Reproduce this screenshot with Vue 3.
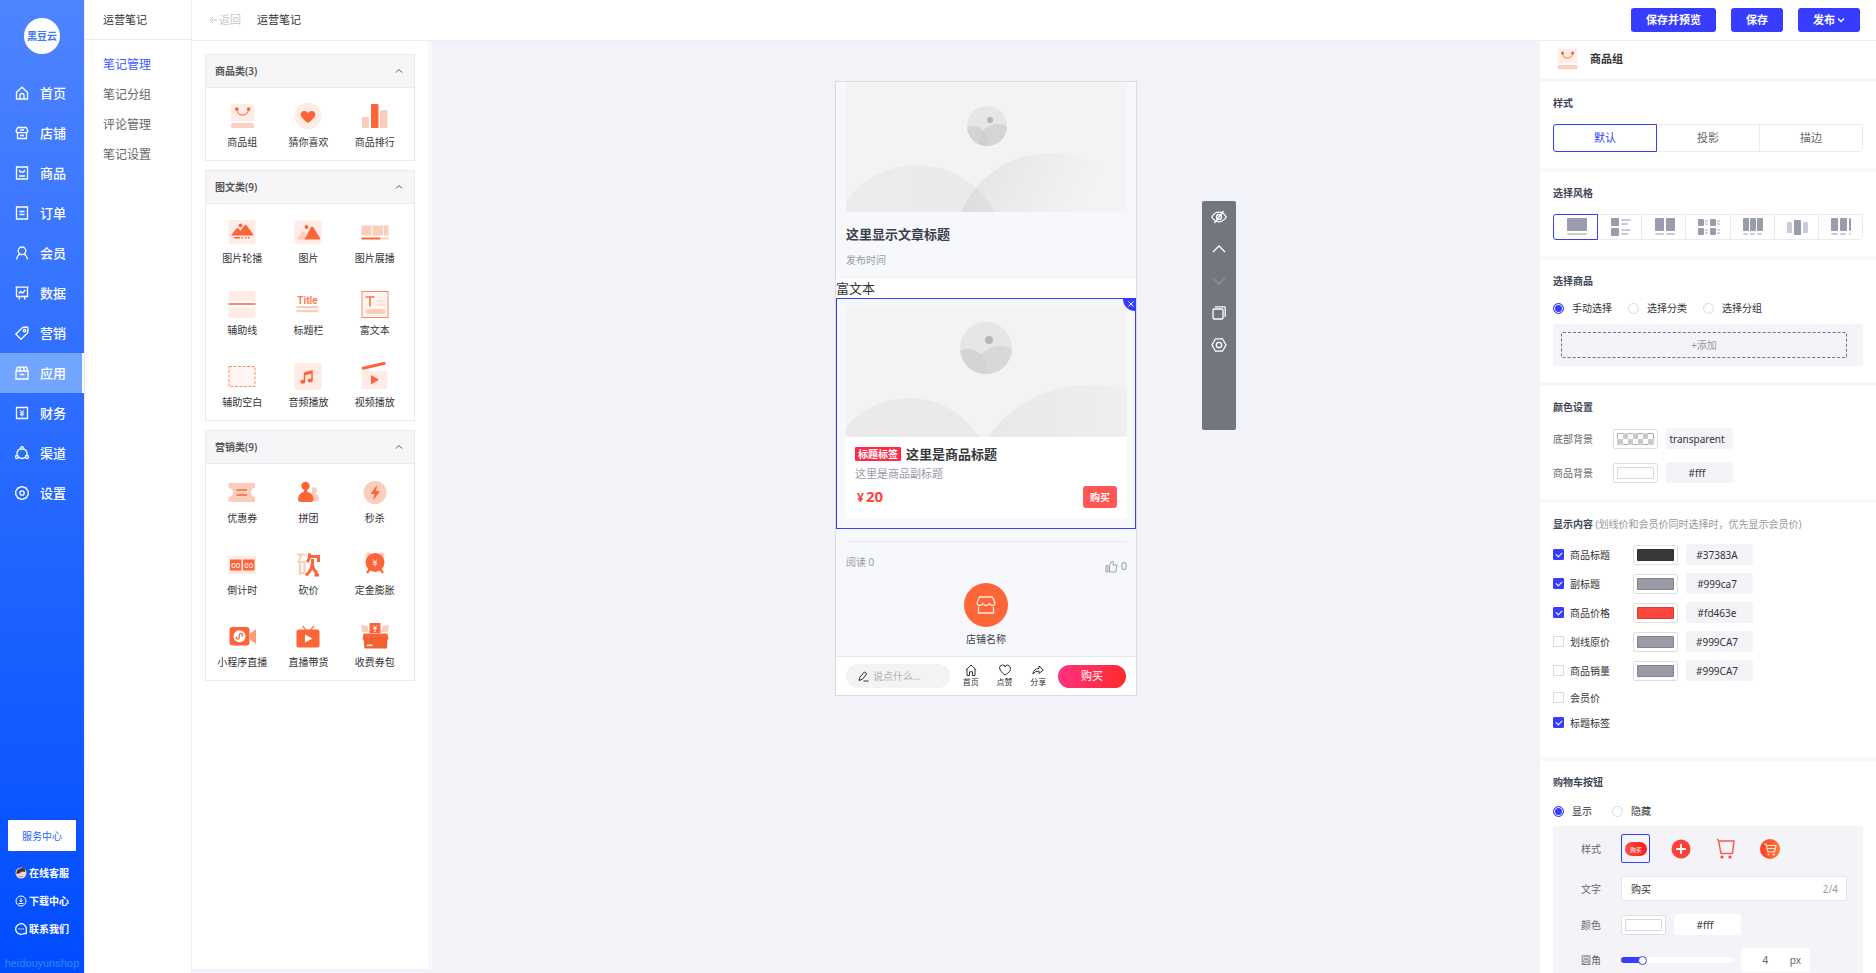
<script setup>
import { ref } from 'vue'

const navItems = [
  { label: '首页', icon: '<path d="M1.500 6.200 7 1.200l5.500 5v6.800h-11z"/><path d="M5 13V9.500a2 2 0 0 1 4 0V13"/>' },
  { label: '店铺', icon: '<path d="M2.800 1.500h8.400L13 5q-.4 1.600-2 1.600H3Q1.400 6.600 1 5z"/><path d="M2.500 7v5.500h9V7M5 9.500h4M5 4h4"/>' },
  { label: '商品', icon: '<path d="M1.500 1h11v12h-11zM4.500 4q0 2.200 2.500 2.200T9.500 4M4 10h6"/>' },
  { label: '订单', icon: '<path d="M1.500 1h11v12h-11zM4.500 5.500h5M4.500 8.500h5"/>' },
  { label: '会员', icon: '<circle cx="7" cy="4.800" r="3.800"/><path d="M1.500 13.500Q2 9.500 5 8.200M12.500 13.500Q12 9.500 9 8.200"/>' },
  { label: '数据', icon: '<path d="M.5 1.200h13M1.500 1.500v9h11v-9M4 13.500l.8-3M10 13.500l-.8-3M3.800 7.500l2-2 1.600 1.500 3-3"/>' },
  { label: '营销', icon: '<path d="M7.500 1.500 12 1l1 1 -.3 4.800L6 13.300.8 8.200z"/><circle cx="9.600" cy="4.600" r="1.200"/>' },
  { label: '应用', icon: '<path d="M1 5 2.500 1.200h9L13 5v8H1zM1 5h12M4.500 5l1-3.500M9.500 5l-1-3.500M4.800 8.500h4.400"/>' },
  { label: '财务', icon: '<path d="M1.500 1.500h11v11h-11z"/><path stroke-width="1" d="M5 4l2 2.500L9 4M4.800 7h4.400M4.800 8.800h4.400M7 6.500v4"/>' },
  { label: '渠道', icon: '<circle cx="7" cy="7.500" r="5"/><circle cx="7" cy="2" r="1.400" fill="#2b6bff"/><circle cx="2" cy="11" r="1.500" fill="#2b6bff"/><circle cx="12" cy="11" r="1.500" fill="#2b6bff"/>' },
  { label: '设置', icon: '<path d="M5 1.500Q7-.2 9 1.500q2.700-.2 3 2.300Q14 5.200 13 7q1 1.800-1 3.200-.3 2.500-3 2.300-2 1.700-4 0-2.700.2-3-2.300Q0 8.800 1 7 0 5.200 2 3.800 2.300 1.300 5 1.500z"/><circle cx="7" cy="7" r="2.200"/>' }
]
const activeNav = ref('应用')

const subItems = ['笔记管理', '笔记分组', '评论管理', '笔记设置']

const bagIcon = '<rect x="3" y="2" width="23" height="17" rx="1" fill="#ffece6"/><rect x="3" y="21" width="23" height="5" rx="1.500" fill="#fbd0c0"/><path d="M9 7q0 6 5.500 6T20.500 7" fill="none" stroke="#fa5f32"/><circle cx="8.800" cy="7" r="1.800" fill="#fa6333"/><circle cx="20.600" cy="7" r="1.800" fill="#fa6333"/>'

const groups = [
  {
    title: '商品类(3)',
    items: [
      { label: '商品组', icon: bagIcon },
      { label: '猜你喜欢', icon: '<circle cx="14" cy="14" r="13.500" fill="#ffece6"/><path d="M14 21Q6.500 16 6.700 12.300 7 8.900 10.200 8.900 12.600 8.900 14 11q1.400-2.100 3.800-2.100 3.200 0 3.500 3.400Q21.500 16 14 21z" fill="#fd6538"/>' },
      { label: '商品排行', icon: '<rect x="1" y="15" width="7" height="11" rx="1" fill="#fbcdbd"/><rect x="10" y="2" width="7.500" height="24" rx="1" fill="#fd6538"/><rect x="19" y="8" width="7.500" height="18" rx="1" fill="#fbcdbd"/>' }
    ]
  },
  {
    title: '图文类(9)',
    items: [
      { label: '图片轮播', icon: '<rect x=".5" y="2" width="27" height="24" rx="1" fill="#ffece6"/><path d="M3 17.500l5.500-7q1-1 2 0l2 2.300 4-5.500q1-1 2 0L25 16q.5 1.500-1 1.500z" fill="#fd6538"/><circle cx="12.500" cy="7.500" r="1.900" fill="#fd6538"/><path d="M6 19.700h6M13.500 19.700h1.500M17 19.700h1.500M20 19.700h1.500" stroke="#fd6538" stroke-width="1.600"/>' },
      { label: '图片', icon: '<rect x=".5" y="2.500" width="27" height="23.500" rx="1" fill="#ffece6"/><path d="M3 21.500l5-8q1-1 2 0l5 8z" fill="#fbcdbd"/><path d="M10.500 21.500 17 9q1-1 2 0l7 11q.5 1.500-1 1.500z" fill="#fd6538"/><circle cx="12.500" cy="9" r="1.900" fill="#fd6538"/>' },
      { label: '图片展播', icon: '<path d="M.5 7.500h10v10H.5zM11.500 7.500H22v10H11.500zM22.800 7.500h4.700v10h-4.700z" fill="#fbcdbd"/><path d="M.5 20.500h19" stroke="#fd6538" stroke-width="2"/><path d="M19.500 20.500h8" stroke="#fbcdbd" stroke-width="2"/>' },
      { label: '辅助线', icon: '<path d="M.5 1h27v10H.5zM.5 17.500h27V28H.5z" fill="#ffece6"/><path d="M.5 14h27" stroke="#fb8a68" stroke-width="2"/>' },
      { label: '标题栏', icon: '<text x="13.500" y="14" text-anchor="middle" font-family="Roboto,sans-serif" font-weight="700" font-size="10" fill="#fb7c55">Title</text><path d="M2.500 17.200h22M2.500 21.200h22" stroke="#fbcdbd" stroke-width="2.200"/>' },
      { label: '富文本', icon: '<rect x="1" y="1.500" width="26" height="26" fill="#fff6f2" stroke="#fb8a68"/><path d="M4.500 7h9M9 7v9.500" stroke="#fa7247" stroke-width="1.600"/><path d="M16 11h8M16 15h8" stroke="#fbcdbd"/><rect x="4.500" y="19" width="20" height="5" rx="2.500" fill="#fbcdbd"/>' },
      { label: '辅助空白', icon: '<rect x="1" y="4.500" width="26" height="20" fill="#fff6f2" stroke="#fb8a68" stroke-dasharray="3 1.500"/>' },
      { label: '音频播放', icon: '<rect x=".5" y="1" width="27" height="27" rx="1" fill="#ffece6"/><path d="M10.500 19.500v-8.500l7.500-2v9.500" fill="none" stroke="#fd6538" stroke-width="1.500"/><path d="M10.500 11l7.500-2v2.500l-7.500 2z" fill="#fd6538"/><ellipse cx="8.800" cy="19.800" rx="2.500" ry="2" fill="#fd6538"/><ellipse cx="16.200" cy="18.600" rx="2.500" ry="2" fill="#fd6538"/>' },
      { label: '视频播放', icon: '<path d="M1 6.500 24.500 1" stroke="#fd6538" stroke-width="3"/><rect x=".5" y="9" width="26" height="18" rx="1" fill="#ffece6"/><path d="M10 13l8 4.800-8 4.700z" fill="#fd6538"/>' }
    ]
  },
  {
    title: '营销类(9)',
    items: [
      { label: '优惠券', icon: '<path d="M.5 5h26.500v5q-4 .5-4 4.500t4 4.500v5H.5v-5q4.500-.5 4.500-4.500T.5 10z" fill="#fbcdbd"/><path d="M8.500 12h10.500M8.500 17h10.500" stroke="#fd6538" stroke-width="1.600"/>' },
      { label: '拼团', icon: '<path d="M17 23.500h6q2 0 2-2.500 0-4-4-5.500a3.300 3.300 0 1 0-3-6z" fill="#fbcdbd"/><circle cx="11.500" cy="8" r="4.200" fill="#fd6538"/><path d="M10 11h3v2.500q6.500 2 6.500 7.500 0 3-3 3H7q-3 0-3-3 0-5.500 6-7.500z" fill="#fd6538"/>' },
      { label: '秒杀', icon: '<circle cx="14" cy="14.500" r="11.500" fill="#fbcdbd"/><path d="M16 7 9.500 16h4L12 22.500l7-9.500h-4z" fill="#fd6538"/>' },
      { label: '倒计时', icon: '<rect x="0" y="6" width="28" height="18" rx="1" fill="#ffece6"/><path d="M2 9.500h11.500v11H2zM15 9.500h11.500v11H15z" fill="#fd6538"/><text x="7.700" y="17.800" text-anchor="middle" font-family="Roboto,sans-serif" font-size="8" fill="#fff">00</text><text x="20.700" y="17.800" text-anchor="middle" font-family="Roboto,sans-serif" font-size="8" fill="#fff">00</text>' },
      { label: '砍价', icon: '<path d="M3 4.500h8.500M7 4.500Q6.500 9.500 4 12.500M6 12v13M6 12h4.500v11H6" fill="none" stroke="#fbcdbd" stroke-width="2.200"/><path d="M15.500 3.500v4q-1 3-2.500 4.500M15 6.500h9.500v5.500M18.500 9v4Q18 20 12 25.500M18.500 14q.5 6 3.500 7.500V25h3" fill="none" stroke="#fd6538" stroke-width="3"/>' },
      { label: '定金膨胀', icon: '<circle cx="7.500" cy="5.500" r="3" fill="#fbcdbd"/><circle cx="20.500" cy="5.500" r="3" fill="#fbcdbd"/><circle cx="14" cy="12.500" r="9.500" fill="#fd6538"/><path d="M8.500 19.500 6 23M19.500 19.500 22 23" stroke="#fd6538" stroke-width="2.200"/><path d="M12 9.500l2 2.500 2-2.500M11.800 12.500h4.400M11.800 14.300h4.400M14 12v4.500" fill="none" stroke="#ffe4da"/>' },
      { label: '小程序直播', icon: '<rect x="1.500" y="5" width="20" height="18.500" rx="3" fill="#fd6538"/><path d="M22 11.500l6-4.500v15l-6-4.500z" fill="#fb9b7c"/><circle cx="11.500" cy="14.300" r="6" fill="#fff"/><path d="M9.200 14.500q-1.500 1-.5 2.200 1.200 1 2.600-.8v-3.200q1.200-2 2.800-.8 1 1.400-.8 2.400" fill="none" stroke="#fd6538" stroke-width="1.300"/>' },
      { label: '直播带货', icon: '<path d="M8.500 4l4 4.500M20 4l-4 4.500" stroke="#fb8a68" stroke-width="1.600"/><rect x="2.500" y="7.500" width="23" height="18" rx="2" fill="#fd6538"/><path d="M11 12.500l7.500 4-7.500 4z" fill="#fff"/>' },
      { label: '收费券包', icon: '<path d="M0 3l4 1 2-1 2 7H1zM28 3l-4 1-2-1-2 7h7z" fill="#fbcdbd"/><path d="M8.500 1h11v10h-11z" fill="#fd6538"/><path d="M12.200 3.500 14 6l1.800-2.500M12 6.500h4M14 6v4" fill="none" stroke="#fff"/><path d="M2.500 11.500h24l1 6h-26z" fill="#fd6538"/><path d="M2.500 16h24l-.5 10.500H3.500z" fill="#f26231"/><path d="M6 23.300h5.500" stroke="#fff" stroke-width="1.500"/>' }
    ]
  }
]

const tools = [
  { label: '隐藏', icon: '<path d="M.8 8Q3.500 3.200 8 3.200T15.200 8Q12.500 12.800 8 12.800T.8 8z"/><circle cx="8" cy="8" r="2.500"/><path d="M12.500 2 3.500 14"/>' },
  { label: '上移', icon: '<path d="M2 11l6-6 6 6"/>' },
  { label: '下移', icon: '<path d="M2 5l6 6 6-6" stroke="#8e9095"/>' },
  { label: '复制', icon: '<rect x="2" y="4" width="10" height="10" rx="1"/><path d="M4 1.800h9.500q.7 0 .7.700V12"/>' },
  { label: '设置', icon: '<path d="M4.500 1.800h7L15 8l-3.500 6.200h-7L1 8z"/><circle cx="8" cy="8" r="2.700"/>' }
]

const styleTabs = ['默认', '投影', '描边']
const activeStyle = ref('默认')

const block = (x, y, w, h) => `<rect x="${x}" y="${y}" width="${w}" height="${h}" rx="1" fill="#989cab"/>`
const bar = (x, y, w, h = 2) => `<rect x="${x}" y="${y}" width="${w}" height="${h}" rx="1" fill="#c8ccd9"/>`
const layouts = [
  { label: '大图', icon: block(3, 0, 20, 13) + bar(3, 15, 20) },
  { label: '列表', icon: block(3, 0, 8, 8) + bar(13, 1, 10) + bar(13, 5, 7) + block(3, 10, 8, 8) + bar(13, 11, 10) + bar(13, 15, 7) },
  { label: '两列', icon: block(3, 0, 9, 13) + block(14, 0, 9, 13) + bar(3, 15, 9) + bar(14, 15, 9) },
  { label: '两列列表', icon: block(2, 1, 6, 7) + bar(9, 2, 3) + bar(9, 5, 3) + block(14, 1, 6, 7) + bar(21, 2, 3) + bar(21, 5, 3) + block(2, 10, 6, 7) + bar(9, 11, 3) + bar(9, 14, 3) + block(14, 10, 6, 7) + bar(21, 11, 3) + bar(21, 14, 3) },
  { label: '三列', icon: block(3, 0, 6, 13) + block(10, 0, 6, 13) + block(17, 0, 6, 13) + bar(3, 15, 5) + bar(10, 15, 5) + bar(17, 15, 5) },
  { label: '轮播', icon: bar(3, 4, 5, 11) + block(10, 2, 7, 15) + bar(19, 4, 5, 11) },
  { label: '横向滑动', icon: block(3, 0, 7, 13) + block(12, 0, 7, 13) + block(21, 0, 2, 13) + bar(3, 15, 7) + bar(12, 15, 6) + bar(21, 15, 2) }
]
const activeLayout = ref('大图')

const sources = ['手动选择', '选择分类', '选择分组']
const source = ref('手动选择')

const backgrounds = [
  { label: '底部背景', value: 'transparent' },
  { label: '商品背景', value: '#fff' }
]

const fields = ref([
  { label: '商品标题', checked: true, value: '#37383A' },
  { label: '副标题', checked: true, value: '#999ca7' },
  { label: '商品价格', checked: true, value: '#fd463e' },
  { label: '划线原价', checked: false, value: '#999CA7' },
  { label: '商品销量', checked: false, value: '#999CA7' },
  { label: '会员价', checked: false },
  { label: '标题标签', checked: true }
])

const cartShown = ref('显示')
const radius = ref(4)
const cartIcons = [
  { label: '文字按钮', icon: '<defs><linearGradient id="pill" x2="1"><stop stop-color="#ff4d45"/><stop offset="1" stop-color="#ff1a1a"/></linearGradient></defs><rect x="0" y="4" width="22" height="14" rx="7" fill="url(#pill)"/><text x="11" y="13.500" text-anchor="middle" font-family="Noto Sans CJK SC,sans-serif" font-size="6" fill="#fff">购买</text>' },
  { label: '加号', icon: '<circle cx="11" cy="11" r="9.500" fill="#fd4139"/><path d="M11 6v10M6 11h10" stroke="#fff" stroke-width="1.800"/>' },
  { label: '购物车', icon: '<path d="M2 1l1.500 1.500 2.500 13h11.500l1.500-12.500H4" fill="none" stroke="#fd5a52" stroke-width="1.500"/><circle cx="7" cy="19" r="1.600" fill="#fd4139"/><circle cx="15" cy="19" r="1.600" fill="#fd4139"/>' },
  { label: '圆形购物车', icon: '<defs><linearGradient id="disc" x2="1"><stop stop-color="#ff3c1f"/><stop offset="1" stop-color="#ff7a35"/></linearGradient></defs><circle cx="10" cy="11" r="10" fill="url(#disc)"/><path d="M4 6h2l2 8h6.500l1.500-6.500H6.500M7.500 10.500h8" fill="none" stroke="#ffe3d8" stroke-width="1.200"/><circle cx="8.500" cy="16.500" r="1.100" fill="#ffe3d8"/><circle cx="13.500" cy="16.500" r="1.100" fill="#ffe3d8"/>' }
]
</script>

<template>
  <div class="app">
    <nav class="sidebar">
      <a class="logo" href="#">黑豆云</a>
      <a v-for="n in navItems" :key="n.label" href="#" class="nav-item" :class="{ active: n.label === activeNav }" @click.prevent="activeNav = n.label">
        <svg class="line-icon" width="14" height="14" viewBox="0 0 14 14" v-html="n.icon"></svg>
        <span>{{ n.label }}</span>
      </a>
      <div class="support">
        <button class="service">服务中心</button>
        <a href="#">
          <svg width="12" height="12" viewBox="0 0 12 12"><circle cx="6" cy="6" r="5.500" fill="#f1d6cb" /><path d="M1.500 7Q1 2 6 1.200T10 5L7 4.500 4 6.500z" fill="#47312f" /><path d="M4 9q2 1.500 4 0" fill="none" stroke="#c98a78" /></svg>
          <span>在线客服</span>
        </a>
        <a href="#">
          <svg class="line-icon thin" width="12" height="12" viewBox="0 0 12 12"><circle cx="6" cy="6" r="5" /><path d="M6 3v4M4.500 5.500 6 7l1.500-1.500M3.500 8.500h5" /></svg>
          <span>下载中心</span>
        </a>
        <a href="#">
          <svg class="line-icon" width="12" height="12" viewBox="0 0 12 12"><path d="M10 10.500h1.300V6A5.300 5.300 0 1 0 8.500 10.700zM3.500 6h1M5.600 6h1M7.700 6h1" /></svg>
          <span>联系我们</span>
        </a>
        <small>heidouyunshop</small>
      </div>
    </nav>

    <aside class="submenu">
      <h2>运营笔记</h2>
      <a v-for="(s, i) in subItems" :key="s" href="#" :class="{ active: i === 0 }">{{ s }}</a>
    </aside>

    <div class="workspace">
      <header class="topbar">
        <a class="back" href="#"><svg width="8" height="8" viewBox="0 0 8 8"><path d="M8 4H1M4 1 1 4l3 3" /></svg>返回</a>
        <h1>运营笔记</h1>
        <div class="actions">
          <button class="primary">保存并预览</button>
          <button class="primary">保存</button>
          <button class="primary">发布<svg width="8" height="8" viewBox="0 0 8 8"><path d="M1 2.500l3 3 3-3" /></svg></button>
        </div>
      </header>

      <div class="editor">
        <aside class="widgets">
          <section v-for="g in groups" :key="g.title" class="group">
            <button class="group-head">{{ g.title }}<svg width="8" height="6" viewBox="0 0 8 6"><path d="M1 4.500l3-3 3 3" /></svg></button>
            <div class="group-body">
              <button v-for="w in g.items" :key="w.label" class="widget">
                <svg width="28" height="28" viewBox="0 0 28 28" v-html="w.icon"></svg>
                <span>{{ w.label }}</span>
              </button>
            </div>
          </section>
        </aside>

        <main class="canvas">
          <div class="phone">
            <article class="article">
              <svg class="picture" viewBox="0 0 281 129">
                <defs>
                  <linearGradient id="hill-left" x2="1" y2="0"><stop stop-opacity=".03" /><stop offset="1" stop-opacity=".04" /></linearGradient>
                  <linearGradient id="hill-right" x2="1" y2=".5"><stop offset=".1" stop-opacity=".06" /><stop offset=".65" stop-opacity="0" /></linearGradient>
                  <clipPath id="disc-a"><circle cx="141" cy="43" r="20" /></clipPath>
                </defs>
                <rect width="281" height="129" fill="#f3f3f3" />
                <circle cx="71" cy="169" r="87" fill="url(#hill-left)" />
                <circle cx="204" cy="166" r="96" fill="url(#hill-right)" />
                <circle cx="141" cy="43" r="20" fill="#e6e6e6" />
                <g clip-path="url(#disc-a)"><circle cx="127" cy="58" r="15" fill="#d4d4d4" /><circle cx="152" cy="60" r="19" fill="#cfcfcf" opacity=".75" /></g>
                <circle cx="144" cy="37" r="3" fill="#b5b5b5" />
              </svg>
              <h3>这里显示文章标题</h3>
              <p>发布时间</p>
            </article>
            <div class="rich">富文本</div>
            <section class="selected">
              <button class="close" aria-label="删除"><svg width="6" height="6" viewBox="0 0 6 6"><path d="M.5.5l5 5M5.500.5l-5 5" /></svg></button>
              <div class="product">
                <svg class="picture" viewBox="0 0 281 130">
                  <defs>
                    <linearGradient id="slope" x2="1" y2="0"><stop stop-color="#e7e7e7" /><stop offset=".8" stop-color="#f0f0f0" /></linearGradient>
                    <clipPath id="disc-b"><circle cx="140" cy="41" r="26" /></clipPath>
                  </defs>
                  <rect width="281" height="130" fill="#f3f3f3" />
                  <circle cx="63" cy="173" r="82" fill="#eaeaea" />
                  <circle cx="241" cy="198" r="120" fill="url(#slope)" />
                  <circle cx="140" cy="41" r="26" fill="#e6e6e6" />
                  <g clip-path="url(#disc-b)"><circle cx="122" cy="61" r="19" fill="#d4d4d4" /><circle cx="154" cy="63" r="24" fill="#d3d3d3" opacity=".75" /></g>
                  <circle cx="143" cy="33" r="4" fill="#b5b5b5" />
                </svg>
                <div class="product-info">
                  <h3><span class="tag">标题标签</span>这里是商品标题</h3>
                  <p>这里是商品副标题</p>
                  <div class="price-row">
                    <strong><small>¥</small>20</strong>
                    <button class="buy">购买</button>
                  </div>
                </div>
              </div>
            </section>
            <div class="stats">
              <span>阅读 0</span>
              <span class="likes"><svg width="13" height="13" viewBox="0 0 13 13"><path d="M1 5.500h2v6.500H1zM4.500 12V5.500L7 1q1.600.2 1.400 2L8 5h4l-1.200 7z" /></svg>0</span>
            </div>
            <div class="shop">
              <span class="shop-logo"><svg width="20" height="20" viewBox="0 0 20 20"><path d="M3.500 2h13L19 8q-.3 2.500-2.500 2.500-2 0-3-2-1.200 2-3.300 2t-3.500-2q-1 2-3 2Q1.300 10.500 1 8zM2.500 12v6h15v-6" /></svg></span>
              <span>店铺名称</span>
            </div>
            <footer class="dock">
              <label class="comment">
                <svg width="11" height="11" viewBox="0 0 11 11"><path d="M1 9.500 2 6l4.500-5 2.300 1.800L4.500 8.200zM5.500 10h5" /></svg>
                <input type="text" placeholder="说点什么..." aria-label="评论" />
              </label>
              <a href="#"><svg width="12" height="12" viewBox="0 0 12 12"><path d="M.8 6 6 1l5.200 5M2 5v6.500h2.500V7.800h3v3.700H10V5" /></svg>首页</a>
              <a href="#"><svg width="12" height="12" viewBox="0 0 12 12"><path d="M6 11Q.5 7 .5 4T3.500 1 6 3q.7-2 2.500-2t3 3T6 11z" /></svg>点赞</a>
              <a href="#"><svg width="12" height="12" viewBox="0 0 12 12"><path d="M.8 10Q2 4.500 7 4.500V2l4.300 4L7 9.500V7Q3 7 .8 10z" /></svg>分享</a>
              <button>购买</button>
            </footer>
          </div>
          <div class="toolbar">
            <button v-for="t in tools" :key="t.label" :aria-label="t.label"><svg width="16" height="16" viewBox="0 0 16 16" v-html="t.icon"></svg></button>
          </div>
        </main>

        <aside class="settings">
          <header class="settings-head">
            <svg width="24" height="24" viewBox="0 0 28 28" v-html="bagIcon"></svg>
            <h2>商品组</h2>
          </header>

          <section>
            <h4>样式</h4>
            <div class="segments tall">
              <button v-for="s in styleTabs" :key="s" :class="{ active: s === activeStyle }" @click="activeStyle = s">{{ s }}</button>
            </div>
          </section>

          <section>
            <h4>选择风格</h4>
            <div class="segments">
              <button v-for="l in layouts" :key="l.label" :aria-label="l.label" :class="{ active: l.label === activeLayout }" @click="activeLayout = l.label">
                <svg width="24" height="18" viewBox="0 0 24 18" v-html="l.icon"></svg>
              </button>
            </div>
          </section>

          <section>
            <h4>选择商品</h4>
            <div class="radios">
              <label v-for="s in sources" :key="s"><input v-model="source" type="radio" name="source" :value="s" />{{ s }}</label>
            </div>
            <div class="add-box"><button>+添加</button></div>
          </section>

          <section>
            <h4>颜色设置</h4>
            <div v-for="b in backgrounds" :key="b.label" class="color-row">
              <span class="row-label">{{ b.label }}</span>
              <button class="swatch" :aria-label="b.label + '颜色'"><i :class="{ checker: b.value === 'transparent' }"></i></button>
              <input class="hex" type="text" :value="b.value" :aria-label="b.label" />
            </div>
          </section>

          <section class="display">
            <h4>显示内容 <span>(划线价和会员价同时选择时，优先显示会员价)</span></h4>
            <div v-for="f in fields" :key="f.label" class="field-row" :class="{ plain: !f.value }">
              <label><input v-model="f.checked" type="checkbox" />{{ f.label }}</label>
              <template v-if="f.value">
                <button class="swatch" :aria-label="f.label + '颜色'"><i :style="{ background: f.value }"></i></button>
                <input class="hex" type="text" :value="f.value" :aria-label="f.label + '色值'" />
              </template>
            </div>
          </section>

          <section>
            <h4>购物车按钮</h4>
            <div class="radios wide">
              <label v-for="s in ['显示', '隐藏']" :key="s"><input v-model="cartShown" type="radio" name="cart" :value="s" />{{ s }}</label>
            </div>
            <div class="cart-box">
              <div class="cart-row">
                <span>样式</span>
                <div class="cart-icons">
                  <button v-for="(c, i) in cartIcons" :key="c.label" :aria-label="c.label" :class="{ active: i === 0 }"><svg width="22" height="22" viewBox="0 0 22 22" v-html="c.icon"></svg></button>
                </div>
              </div>
              <div class="cart-row">
                <label for="cart-text">文字</label>
                <div class="text-box"><input id="cart-text" type="text" value="购买" /><span>2/4</span></div>
              </div>
              <div class="cart-row">
                <span>颜色</span>
                <button class="swatch" aria-label="文字颜色"><i></i></button>
                <input class="hex white" type="text" value="#fff" aria-label="文字色值" />
              </div>
              <div class="cart-row">
                <label for="cart-radius">圆角</label>
                <input id="cart-radius" v-model="radius" class="slider" type="range" min="0" max="24" />
                <div class="unit-box"><input v-model="radius" type="text" aria-label="圆角数值" /><span>px</span></div>
              </div>
            </div>
          </section>
        </aside>
      </div>
    </div>
  </div>
</template>

<style>
body {
  margin: 0;
}
</style>

<style scoped>
.app {
  display: flex;
  height: 100vh;
  overflow: hidden;
  background: #fff;
  color: #333;
  font: 10px/16px "Noto Sans", "Noto Sans CJK SC", sans-serif;
}
.app * {
  box-sizing: border-box;
}
a {
  color: inherit;
  text-decoration: none;
}
button,
input {
  margin: 0;
  padding: 0;
  border: 0;
  background: none;
  color: inherit;
  font: inherit;
  outline: none;
}
button {
  cursor: pointer;
}
h1,
h2,
h3,
h4,
p {
  margin: 0;
  font-size: 11px;
}
svg {
  display: block;
  flex: none;
}
.line-icon {
  fill: none;
  stroke: #fff;
  stroke-width: 1.3;
}
.line-icon.thin {
  stroke-width: 1;
}

/* Sidebar */
.sidebar {
  flex: none;
  display: flex;
  flex-direction: column;
  width: 84px;
  background: linear-gradient(#4d84ff, #004cff);
  color: #fff;
}
.logo {
  display: flex;
  align-items: center;
  justify-content: center;
  width: 36px;
  height: 36px;
  margin: 18px auto 19px 24px;
  border-radius: 50%;
  background: #fff;
  color: #3f78f5;
  font-size: 10px;
  font-weight: 700;
}
.nav-item {
  display: flex;
  align-items: center;
  gap: 11px;
  height: 40px;
  padding-left: 15px;
  font-size: 13px;
  font-weight: 500;
}
.nav-item.active {
  border-right: 2px solid #fff;
  background: #72a5ff;
}
.support {
  display: flex;
  flex-direction: column;
  margin-top: auto;
  padding: 0 4px 1px;
}
.service {
  height: 31px;
  margin: 0 4px 8px;
  border-radius: 1px;
  background: #fff;
  color: #1c66ff;
}
.support a {
  display: flex;
  align-items: center;
  gap: 2px;
  height: 28px;
  padding-left: 11px;
  font-weight: 600;
}
.support small {
  margin-top: 13px;
  color: #2a8bff;
  font: 11px/16px Roboto, sans-serif;
  text-align: center;
}

/* Second level menu */
.submenu {
  flex: none;
  display: flex;
  flex-direction: column;
  width: 108px;
  border: solid #ebebf0;
  border-width: 0 1px;
}
.submenu h2 {
  height: 40px;
  margin-bottom: 10px;
  padding: 4px 0 0 18px;
  border-bottom: 1px solid #ebebf0;
  font-weight: 400;
  line-height: 32px;
}
.submenu a {
  padding-left: 18px;
  color: #666;
  font-size: 12px;
  line-height: 30px;
}
.submenu a.active {
  color: #3a5bff;
}

/* Top bar */
.workspace {
  flex: 1;
  display: flex;
  flex-direction: column;
  min-width: 0;
}
.topbar {
  display: flex;
  align-items: center;
  gap: 16px;
  height: 41px;
  padding: 0 16px 0 17px;
  border-bottom: 1px solid #eeeef2;
  font-size: 11px;
}
.topbar h1 {
  font-weight: 400;
}
.back {
  display: flex;
  align-items: center;
  gap: 2px;
  color: #c6c8cc;
}
.topbar svg,
.group-head svg {
  fill: none;
  stroke: currentColor;
}
.actions {
  display: flex;
  gap: 15px;
  margin-left: auto;
}
.primary {
  display: flex;
  align-items: center;
  gap: 2px;
  height: 24px;
  padding: 0 15px;
  border-radius: 3px;
  background: #383cff;
  color: #fff;
  font-weight: 600;
}
.primary svg {
  stroke-width: 1.4;
}

/* Widget library */
.editor {
  flex: 1;
  display: flex;
  min-height: 0;
  background: #f2f3f8;
}
.widgets {
  flex: none;
  display: flex;
  flex-direction: column;
  gap: 9px;
  width: 240px;
  margin-bottom: 4px;
  padding: 13px 13px 0;
  border-right: 4px solid #f7f8fc;
  background: #fff;
}
.group {
  border: 1px solid #ebebed;
}
.group-head {
  display: flex;
  align-items: center;
  justify-content: space-between;
  width: 100%;
  height: 33px;
  padding: 0 11px 0 9px;
  border-bottom: 1px solid #ebebed;
  background: #f6f6f9;
  color: #555;
  font-weight: 600;
}
.group-body {
  display: grid;
  grid-template-columns: repeat(3, 1fr);
  padding: 0 6px 0 3px;
}
.widget {
  display: flex;
  flex-direction: column;
  align-items: center;
  gap: 4px;
  height: 72px;
  padding-top: 14px;
  white-space: nowrap;
}

/* Canvas */
.canvas {
  position: relative;
  flex: 1;
  display: flex;
  justify-content: center;
  align-items: flex-start;
  min-width: 0;
  padding-top: 40px;
}
.phone {
  width: 302px;
  border: 1px solid #dcdcde;
  background: #f7f8fb;
}
.picture {
  width: 100%;
  border-radius: 2px;
}
.article {
  padding: 1px 9px 11px 10px;
}
.article h3 {
  margin-top: 12px;
  color: #3a3f4d;
  font-size: 13px;
  font-weight: 600;
  line-height: 20px;
}
.article p {
  margin-top: 8px;
  color: #999ca7;
  font-size: 10px;
}
.rich {
  background: #fff;
  font-size: 13px;
  line-height: 19px;
}
.selected {
  position: relative;
  padding: 8px 8px 9px 9px;
  border: 1px solid #383cff;
}
.close {
  position: absolute;
  top: 0;
  right: 0;
  display: flex;
  justify-content: flex-end;
  width: 12px;
  height: 12px;
  padding: 2px 1px;
  border-radius: 0 0 0 12px;
  background: #383cff;
}
.close svg {
  stroke: #fff;
}
.product {
  border-radius: 3px;
  background: #fff;
  overflow: hidden;
}
.product-info {
  padding: 7px 10px 11px 9px;
}
.product h3 {
  display: flex;
  align-items: center;
  gap: 5px;
  color: #37383a;
  font-size: 13px;
  font-weight: 600;
  line-height: 20px;
}
.tag {
  padding: 0 3px;
  border-radius: 1px;
  background: #ff2b4b;
  color: #fff;
  font-size: 10px;
  line-height: 14px;
}
.product p {
  color: #999ca7;
  font-size: 11px;
  line-height: 20px;
}
.price-row {
  display: flex;
  align-items: center;
  justify-content: space-between;
  height: 24px;
  padding: 2px 0 0 2px;
}
.price-row strong {
  color: #fd463e;
  font-size: 15px;
}
.price-row small {
  margin-right: 2px;
  font-size: 12px;
}
.buy {
  width: 34px;
  height: 22px;
  border-radius: 3px;
  background: #ff5656;
  color: #fff;
  font-weight: 600;
}
.stats {
  display: flex;
  justify-content: space-between;
  margin: 12px 9px 0 10px;
  padding-top: 12px;
  border-top: 1px solid #ebebed;
  color: #999ca7;
}
.likes {
  display: flex;
  align-items: center;
  gap: 3px;
  padding-top: 4px;
  font-size: 11px;
}
.likes svg {
  fill: none;
  stroke: #999ca7;
}
.shop {
  display: flex;
  flex-direction: column;
  align-items: center;
  gap: 4px;
  padding: 9px 0;
  color: #3a3f4d;
}
.shop-logo {
  display: flex;
  align-items: center;
  justify-content: center;
  width: 44px;
  height: 44px;
  border-radius: 50%;
  background: #fc6638;
}
.shop-logo svg {
  fill: none;
  stroke: #ffe8e0;
  stroke-width: 1.3;
}
.dock {
  display: flex;
  align-items: center;
  height: 39px;
  padding: 0 10px;
  border-top: 1px solid #e6e6e8;
  background: #fff;
}
.comment {
  display: flex;
  align-items: center;
  gap: 4px;
  width: 104px;
  height: 24px;
  margin-right: 4px;
  padding: 0 12px;
  border-radius: 12px;
  background: #f3f3f3;
}
.comment input {
  width: 100%;
  min-width: 0;
}
.comment input::placeholder {
  color: #b0b2b8;
}
.dock svg {
  fill: none;
  stroke: #333;
}
.dock a {
  flex: 1;
  display: flex;
  flex-direction: column;
  align-items: center;
  font-size: 8px;
  line-height: 12px;
}
.dock button {
  width: 68px;
  height: 23px;
  margin-left: 3px;
  border-radius: 12px;
  background: linear-gradient(90deg, #ff3380, #ff2b2b);
  color: #fff;
  font-size: 11px;
}
.toolbar {
  position: absolute;
  top: 160px;
  left: calc(50% + 216px);
  width: 34px;
  height: 229px;
  border-radius: 2px;
  background: #73767e;
}
.toolbar button {
  display: flex;
  align-items: center;
  justify-content: center;
  width: 34px;
  height: 32px;
}
.toolbar svg {
  fill: none;
  stroke: #fff;
  stroke-width: 1.3;
}

/* Settings */
.settings {
  flex: none;
  width: 336px;
  overflow: hidden;
  background: #fff;
}
.settings-head {
  display: flex;
  align-items: center;
  gap: 11px;
  height: 41px;
  padding: 0 0 1px 15px;
  border-bottom: 4px solid #f6f7f9;
}
.settings-head h2 {
  font-weight: 600;
}
.settings section {
  padding: 13px 13px 16px;
  border-bottom: 4px solid #f6f7f9;
}
.settings h4 {
  margin-bottom: 13px;
  color: #3d4757;
  font-size: 10px;
  font-weight: 600;
}
.settings h4 span {
  color: #999;
  font-weight: 400;
}
.segments {
  display: flex;
  height: 26px;
}
.segments.tall {
  height: 28px;
  font-size: 11px;
}
.segments button {
  flex: 1;
  display: flex;
  align-items: center;
  justify-content: center;
  margin-left: -1px;
  border: 1px solid #ebebed;
  color: #666;
}
.segments button:first-child {
  margin-left: 0;
  border-radius: 3px 0 0 3px;
}
.segments button:last-child {
  border-radius: 0 3px 3px 0;
}
.segments button.active {
  position: relative;
  border-color: #383cff;
  color: #383cff;
}
.radios {
  display: flex;
  gap: 16px;
  margin: -2px 0 8px;
}
.radios.wide {
  gap: 20px;
  margin: 0 0 7px;
}
.radios label,
.field-row label {
  display: flex;
  align-items: center;
  gap: 8px;
}
.radios input {
  appearance: none;
  width: 11px;
  height: 11px;
  border: 1px solid #d9d9dc;
  border-radius: 50%;
}
.radios input:checked {
  border-color: #383cff;
  background: #383cff;
  box-shadow: inset 0 0 0 1px #fff;
}
.add-box {
  padding: 8px 16px 8px 8px;
  border-radius: 3px;
  background: #f3f3f8;
}
.add-box button {
  width: 100%;
  height: 26px;
  border: 1px dashed #6b7489;
  border-radius: 2px;
  color: #999;
}
.color-row,
.field-row {
  display: flex;
  align-items: center;
  gap: 8px;
  height: 21px;
}
.color-row + .color-row {
  margin-top: 13px;
}
.row-label {
  width: 52px;
  color: #666;
}
.swatch {
  display: flex;
  width: 45px;
  height: 20px;
  padding: 3px;
  border: 1px solid #dfdfe2;
  border-radius: 2px;
  background: #fff;
}
.swatch i {
  flex: 1;
  border: 1px solid rgba(0, 0, 0, 0.15);
  border-radius: 1px;
}
.checker {
  background: repeating-conic-gradient(#c9c9c9 0 25%, #fff 0 50%) 0 0 / 10px 10px;
}
.hex {
  width: 67px;
  height: 21px;
  padding-right: 5px;
  border-radius: 3px;
  background: #f3f3f8;
  text-align: center;
}
.hex.white {
  background: #fff;
}
.display h4 {
  margin-bottom: 12px;
}
.display .field-row {
  margin-bottom: 8px;
}
.display .field-row.plain {
  height: 17px;
}
.settings .display {
  padding-bottom: 18px;
}
.field-row label {
  gap: 6px;
  width: 72px;
}
.field-row input[type="checkbox"] {
  appearance: none;
  width: 11px;
  height: 11px;
  border: 1px solid #d9d9dc;
  border-radius: 1px;
}
.field-row input[type="checkbox"]:checked {
  border-color: #383cff;
  background: #383cff;
}
.field-row input[type="checkbox"]:checked::after {
  content: "";
  display: block;
  width: 5px;
  height: 3px;
  margin: 2px auto;
  border: solid #fff;
  border-width: 0 0 1px 1px;
  transform: rotate(-45deg);
}
.cart-box {
  display: flex;
  flex-direction: column;
  gap: 13px;
  padding: 8px 16px 8px 28px;
  border-radius: 3px;
  background: #f3f3f8;
  color: #666;
}
.cart-row {
  display: flex;
  align-items: center;
  gap: 8px;
}
.cart-row > :first-child {
  width: 32px;
}
.cart-icons {
  display: flex;
  gap: 16px;
}
.cart-icons button {
  display: flex;
  align-items: center;
  justify-content: center;
  width: 29px;
  height: 29px;
}
.cart-icons .active {
  border: 1px solid #383cff;
  border-radius: 2px;
}
.text-box {
  flex: 1;
  display: flex;
  align-items: center;
  height: 25px;
  padding: 0 8px 0 9px;
  border: 1px solid #e6e6e8;
  border-radius: 2px;
  background: #fff;
  color: #999;
}
.text-box input {
  flex: 1;
  min-width: 0;
  color: #333;
}
.cart-row .hex {
  color: #333;
}
.slider {
  appearance: none;
  width: 112px;
  height: 6px;
  border-radius: 3px;
  background: linear-gradient(90deg, #383cff 22px, #fff 22px);
}
.slider::-webkit-slider-thumb {
  appearance: none;
  width: 9px;
  height: 9px;
  border: 1px solid #383cff;
  border-radius: 50%;
  background: #fff;
}
.unit-box {
  display: flex;
  align-items: center;
  width: 69px;
  height: 24px;
  padding-right: 9px;
  border-radius: 3px;
  background: #fff;
}
.unit-box input {
  flex: 1;
  min-width: 0;
  text-align: center;
}
</style>
